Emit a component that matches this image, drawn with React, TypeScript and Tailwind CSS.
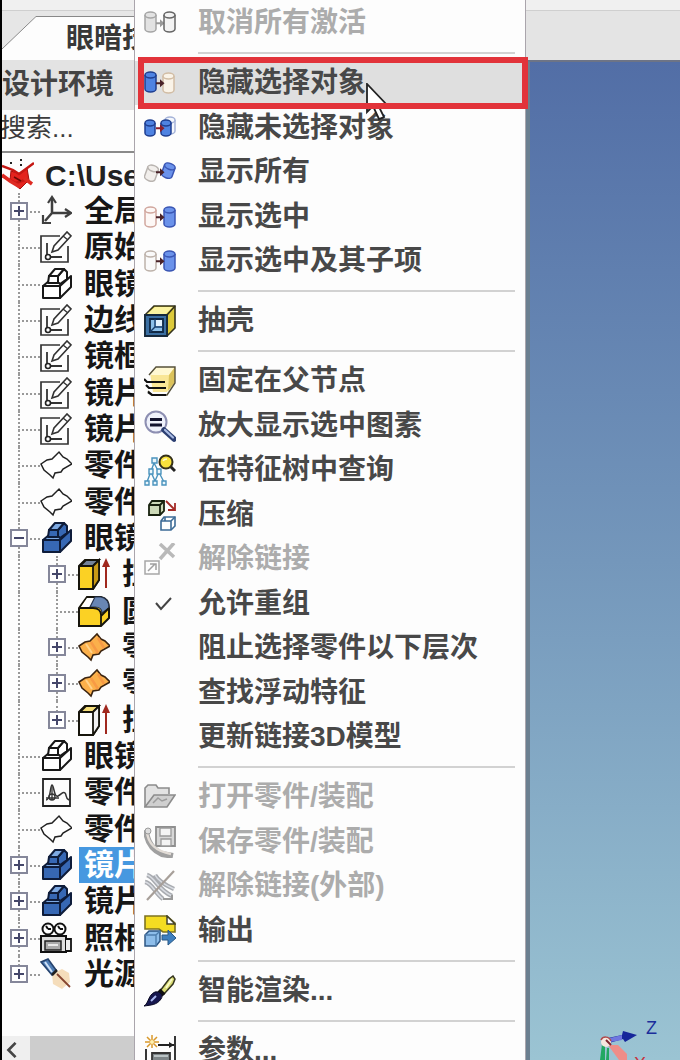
import { ReactNode } from "react";
import clsx from "clsx";

type MenuEntry = { label: string, icon?: ReactNode, disabled?: boolean, active?: boolean };
type TreeEntry = { label: string, icon: ReactNode, box?: "+" | "-", child?: boolean, selected?: boolean, last?: boolean };

function Svg({ children, className = "size-8" }: { children: ReactNode, className?: string }) {
    return <svg viewBox="0 0 32 32" className={clsx("shrink-0", className)} fill="none" aria-hidden="true">{children}</svg>;
}

function Cylinder({ x, y = 6, w = 11, h = 20, fill, stroke }:
    { x: number, y?: number, w?: number, h?: number, fill: string, stroke: string }) {
    const r = w / 2;
    return <g stroke={stroke} strokeWidth="1.5" fill={fill}>
        <path d={`M${x} ${y + 3} a${r} 3 0 0 1 ${w} 0 v${h - 6} a${r} 3 0 0 1 ${-w} 0 z`} />
        <path d={`M${x} ${y + 3} a${r} 3 0 0 0 ${w} 0`} />
    </g>;
}

function SmallArrow({ color = "#4a2228" }: { color?: string }) {
    return <path d="M12 15.2h4v-3l4.5 4-4.5 4v-3h-4z" fill={color} />;
}

const blue = { fill: "#4f83e2", stroke: "#1f3f91" };
const soft = { fill: "#6b92ea", stroke: "#3a56b4" };

const Deactivate = <Svg>
    <Cylinder x={1} y={5} fill="#e2e2e2" stroke="#a5a5a5" />
    <SmallArrow color="#999" />
    <Cylinder x={20} y={5} fill="#f3f3f3" stroke="#666" />
</Svg>;

const HideSelected = <Svg>
    <Cylinder x={1} y={5} {...blue} />
    <Cylinder x={19} y={6} fill="#faf3e8" stroke="#d2bda5" />
    <SmallArrow />
</Svg>;

const HideOthers = <Svg>
    <Cylinder x={21} y={5} w={10} h={17} fill="#f5f7fc" stroke="#a5b3d8" />
    <Cylinder x={1} y={8} w={10} h={16} {...blue} />
    <Cylinder x={17} y={8} w={10} h={16} {...blue} />
    <SmallArrow color="#8c1f2c" />
</Svg>;

const ShowAll = <Svg>
    <g transform="rotate(20 7 17)"><Cylinder x={2} y={9} w={11} h={16} fill="#f2efec" stroke="#b9b4b0" /></g>
    <g transform="rotate(20 24 14)"><Cylinder x={19} y={7} w={11} h={15} {...soft} /></g>
    <SmallArrow />
</Svg>;

const ShowSelected = <Svg>
    <Cylinder x={1} fill="#fdf8f6" stroke="#d1a79e" />
    <Cylinder x={20} {...soft} />
    <SmallArrow />
</Svg>;

const ShowChildren = <Svg>
    <Cylinder x={1} fill="#fafafa" stroke="#bdb2aa" />
    <Cylinder x={20} {...soft} />
    <SmallArrow />
</Svg>;

const Shell = <Svg>
    <path d="M1 10 10 1h21v22l-8 8H1z" fill="#dcc93a" stroke="#33321c" strokeWidth="1.6" />
    <path d="M3 9 11 2h18l-7 7z" fill="#fbf3a0" />
    <path d="M1 10h22v21M23 10l8-9" stroke="#33321c" strokeWidth="1.6" />
    <path d="M1 10h22v21H1z" fill="#3b6fa2" stroke="#15283b" strokeWidth="1.8" />
    <path d="M6 14h13v13H6z" fill="#8cc0ea" stroke="#102844" strokeWidth="1.8" />
    <path d="M6 27 11 22h8M11 22v-8" stroke="#173d6b" strokeWidth="1.4" />
    <path d="M12 15h6v6h-6z" fill="#e3f3ff" />
</Svg>;

const FixParent = <Svg>
    <path d="M6 8 12 2h19v15l-8 10H9z" fill="#f9e696" />
    <path d="M5 10 12 2h19l-6 8z" fill="#fff8d2" />
    <path d="M25 10 31 2v15l-7 9z" fill="#dbc25b" />
    <path d="M5 10 12 2h19v16l-8 12H8l-4-4" stroke="#55503a" strokeWidth="1.4" />
    <path d="M0 14l3 3h18M2 20l3 3h17M4 27l4 3h14" stroke="#111" strokeWidth="2.2" />
</Svg>;

const ZoomSelected = <Svg>
    <circle cx="12" cy="12" r="10.5" fill="#eef1fb" stroke="#8d8fb2" strokeWidth="2" />
    <path d="M6 9.500h12M6 15h12" stroke="#12132e" strokeWidth="2.8" />
    <path d="m20 20 10 9" stroke="#2c3f72" strokeWidth="5.500" strokeLinecap="round" />
    <path d="m21 20 8 7.500" stroke="#a9bbe3" strokeWidth="2.200" strokeLinecap="round" />
</Svg>;

const FindInTree = <Svg>
    <g stroke="#4a93bd" strokeWidth="1.400" fill="#eaf6fc">
        <path d="M10 9 3 28M10 9l10 19M7 18l4 9M15 18l-4 9" />
        <path d="M8 4h5v5H8zM5 15h4v5H5zM13 15h4v5h-4zM1 27h4v4H1zM9 27h4v4H9zM18 27h4v4h-4z" />
    </g>
    <path d="m26 12 5 5" stroke="#222" strokeWidth="3" />
    <circle cx="22" cy="8" r="6.500" fill="#f8e23c" stroke="#34301a" strokeWidth="2" />
    <path d="M19 7c1-2 3-2 4-2" stroke="#fffbd0" strokeWidth="1.500" />
</Svg>;

const Compress = <Svg>
    <path d="M5 6 8 2h12v10l-4 4H5z" fill="#cddab8" stroke="#18220f" strokeWidth="1.800" />
    <path d="M5 6h11v10M16 6l4-4" stroke="#18220f" strokeWidth="1.800" />
    <path d="M17 22 20 18h11v9l-4 4H17z" fill="#fff" stroke="#3c6b96" strokeWidth="1.600" />
    <path d="M17 22h10v9M27 22l4-4M21 18v4" stroke="#3c6b96" strokeWidth="1.600" />
    <path d="m22 2 8 8M31 4v7h-7" stroke="#a52b27" strokeWidth="1.800" />
</Svg>;

const Unlink = <Svg>
    <path d="M1 18h14v13H1z" stroke="#a7a7a7" strokeWidth="1.500" />
    <path d="m4 28 7-7M6 21h6v6" stroke="#a0a0a0" strokeWidth="1.500" />
    <path d="m16 1 14 13M30 0 16 16" stroke="#b9b9b9" strokeWidth="3.500" />
</Svg>;

const Check = <Svg><path d="m12 15 5 6 10-11" stroke="#444" strokeWidth="2" /></Svg>;

const OpenFolder = <Svg>
    <path d="M1 26V7l3-3h8l2 3h11v6" fill="#e2e2e2" stroke="#8c8c8c" strokeWidth="1.600" />
    <path d="m1 26 9-12h21l-8 12z" fill="#cfcfcf" stroke="#8c8c8c" strokeWidth="1.600" />
    <path d="m9 22 5-5 4 3 5-2" stroke="#9c9c9c" strokeWidth="1.500" />
</Svg>;

const SaveLinked = <Svg>
    <path d="M12 1h19v19H12z" fill="#d7d7d7" stroke="#8f8f8f" strokeWidth="1.800" />
    <path d="M16 2h11v8H16zM17 13h10v7H17z" fill="#f4f4f4" stroke="#9b9b9b" strokeWidth="1.300" />
    <path d="M2 4c1 13 7 20 16 24l11 2" stroke="#a0a0a0" strokeWidth="6" />
    <path d="M3 6c1 11 8 19 24 22" stroke="#e2dcd6" strokeWidth="2.500" />
    <circle cx="4" cy="5" r="3" fill="#ddd" stroke="#9b9b9b" />
</Svg>;

const UnlinkExternal = <Svg>
    <path d="M3 5c8 2 10 14 25 21M1 12c7 1 10 11 18 17M11 5c3 6 10 10 19 14" stroke="#a8abb0" strokeWidth="4.500" />
    <path d="M3 5c8 2 10 14 25 21M1 12c7 1 10 11 18 17M11 5c3 6 10 10 19 14" stroke="#d9dce2" strokeWidth="1.600" />
    <path d="M30 1 3 30" stroke="#a79f99" strokeWidth="2.200" />
    <path d="M19 29h9v-4" stroke="#999" strokeWidth="2" />
</Svg>;

const Export = <Svg>
    <path d="M1 1h22l8 7v9H19l-4-3H1z" fill="#f4dc22" stroke="#7d7322" strokeWidth="1.600" />
    <path d="M23 1v8h8z" fill="#fff" stroke="#44432b" strokeWidth="1.500" />
    <path d="m1 20 4-4h11v10l-4 5H1z" fill="#8dbdea" stroke="#2c5583" strokeWidth="1.500" />
    <path d="M1 20h11v11M12 20l4-4" stroke="#4d7eae" strokeWidth="1.400" />
    <path d="M18 20h6v-5l8 8-8 7v-5h-6z" fill="#3e7fbe" stroke="#285886" />
</Svg>;

const Brush = <Svg>
    <path d="m16 16 9-12 4-3 2 3-2 5-9 10z" fill="#d9dc74" stroke="#35351f" strokeWidth="1.500" />
    <path d="m15 15 5 5" stroke="#111" strokeWidth="4" />
    <path d="M0 31c5-3 4-11 11-14 5-1 9 3 6 7-4 6-10 6-17 7z" fill="#16164e" stroke="#0a0a22" />
    <path d="m7 26 5-5" stroke="#aab9f2" strokeWidth="2" />
    <path d="m22 13 6-9" stroke="#fbfbc9" strokeWidth="1.800" />
</Svg>;

const Params = <Svg>
    <path d="M31 1v30M14 10h16M2 14v17" stroke="#222" strokeWidth="1.800" />
    <path d="m25 7 5 3-5 3z" fill="#222" />
    <path d="M8 31V18h18v13" fill="#7d8588" stroke="#333" strokeWidth="1.800" />
    <path d="M10 21h14" stroke="#b9c2c4" strokeWidth="2" />
    <path d="M8 0v13M1 7h14M3 2l10 10M13 2 3 12" stroke="#d9992b" strokeWidth="1.500" />
    <circle cx="8" cy="7" r="2" fill="#fff0b0" />
</Svg>;

const Part = <Svg>
    <path d="m9 12 9 3 7-6 2 12-9 9-10-9z" fill="#e4231e" stroke="#a50f0c" />
    <path d="m0 7 11 4 6 4 15-11M0 17l14 7 12-4" stroke="#c51713" strokeWidth="2.500" />
    <path d="m0 16 8 6 10 6M22 19l8 6" stroke="#de2a22" strokeWidth="3.500" />
    <path d="m12 18 7 4" stroke="#6b0906" strokeWidth="1.500" />
    <path d="M8 4h2M18 1h2M18 6h2" stroke="#222" strokeWidth="2" />
</Svg>;

const Axes = <Svg>
    <path d="M12 4v14h17M12 18 5 26" stroke="#3f3f3f" strokeWidth="2.500" />
    <path d="m8 8 4-6 4 6M25 14l6 4-6 4M3 20v8h8" stroke="#3f3f3f" strokeWidth="2.200" />
</Svg>;

const Sketch = <Svg>
    <path d="M20 5H1v26h27V15" stroke="#333" strokeWidth="1.700" />
    <path d="M7 12v12M10 26h12" stroke="#333" strokeWidth="1.800" />
    <circle cx="8" cy="26" r="2.500" stroke="#222" strokeWidth="1.600" />
    <path d="m12 21 2-6L27 1l4 4-13 14z" fill="#fff" stroke="#333" strokeWidth="1.600" />
    <path d="m23 5 5 4" stroke="#333" strokeWidth="1.400" />
</Svg>;

function Block({ fill, top, stroke }: { fill: string, top: string, stroke: string }) {
    return <Svg>
        <g stroke={stroke} strokeWidth="2" strokeLinejoin="round">
            <path d="m3 18 6-5h18l4-4-10 9z" fill={top} />
            <path d="M20 18 31 8v11L20 30z" fill={fill} />
            <path d="M3 18h17v12H3z" fill={fill} />
            <path d="m18 8 6-7 3 3v7l-7 5-2-2z" fill={fill} />
            <path d="m9 8 6-7h9l-6 7z" fill={top} />
            <path d="M9 8h9v7H8z" fill={fill} />
        </g>
    </Svg>;
}

const WhiteBlock = <Block fill="#fff" top="#fff" stroke="#181818" />;
const BlueBlock = <Block fill="#3768b4" top="#7da9e2" stroke="#0e1c3a" />;

const surface = "M1 15 7 11 12 10 19 3 23 8 27 10 32 15 23 20 21 23 15 24 13 29 10 26 4 21z";
const Surface = <Svg><path d={surface} fill="#fff" stroke="#222" strokeWidth="1.500" /></Svg>;
const OrangeSurface = <Svg>
    <path d={surface} fill="#fbb04b" stroke="#3b2410" strokeWidth="1.600" />
    <path d="m13 11 7 11M20 7l6 10" stroke="#f79a45" strokeWidth="2.500" />
    <path d="m8 13 6 9" stroke="#ffd28a" strokeWidth="2" />
</Svg>;

function Extrude({ fill, side, top }: { fill: string, side: string, top: string }) {
    return <Svg>
        <path d="m1 8 6-6h14v20l-6 9H1z" fill={fill} stroke="#17150c" strokeWidth="2" />
        <path d="m2 8 6-6h13l-6 6z" fill={top} stroke="#17150c" strokeWidth="1.800" />
        <path d="m15 8 6-6v20l-6 9z" fill={side} stroke="#17150c" strokeWidth="1.800" />
        <path d="M28 30V5" stroke="#a0281e" strokeWidth="2" />
        <path d="m24 9 4-9 4 9z" fill="#a0281e" />
    </Svg>;
}

const Fillet = <Svg>
    <path d="m1 13 8-11h14c5 1 8 5 8 11v10l-8 8H1z" fill="#fbd124" stroke="#17150c" strokeWidth="2" />
    <path d="m3 12 6-9h8l-5 9z" fill="#fff" />
    <path d="M12 12 17 2h6c5 1 8 5 8 11l-7 5c0-4-3-6-7-6z" fill="#6886b4" stroke="#26344f" strokeWidth="1.200" />
    <path d="M1 13h14c5 0 8 3 8 7v11M23 21l8-8" stroke="#17150c" strokeWidth="1.800" />
</Svg>;

const Curve = <Svg>
    <path d="M3 3h27v27H3z" stroke="#222" strokeWidth="1.800" />
    <path d="M6 24c5 0 4-15 6-15s2 13 6 11 5-5 7-3 0 5 4 7" stroke="#333" strokeWidth="1.500" />
    <path d="M6 22h13M12 9v15" stroke="#333" strokeWidth="1.300" />
    <circle cx="12" cy="21" r="3" stroke="#333" strokeWidth="1.300" />
</Svg>;

const Camera = <Svg>
    <path d="M1 14h25v16H1z" fill="#ddd" stroke="#111" strokeWidth="2" />
    <path d="M5 19h16v9H5z" fill="#aaa" stroke="#222" strokeWidth="1.500" />
    <path d="M8 23h10" stroke="#fff" strokeWidth="1.500" />
    <path d="M26 17h5v12h-5" fill="#eee" stroke="#111" strokeWidth="1.800" />
    <circle cx="8" cy="7" r="5.500" fill="#fff" stroke="#111" strokeWidth="2" />
    <circle cx="20" cy="7" r="5.500" fill="#fff" stroke="#111" strokeWidth="2" />
    <path d="m8 7-2-3M8 7h3M20 7l-2-3M20 7h3" stroke="#111" strokeWidth="2" />
</Svg>;

const Light = <Svg>
    <path d="m12 16 10-5 7 4 1 9-8 7-9-5z" fill="#f5ddbb" />
    <path d="m1 4 7-3 8 11-4 5z" fill="#4f7db5" stroke="#26436e" strokeWidth="1.600" />
    <path d="m5 4 7 10" stroke="#d0e2f7" strokeWidth="2" />
    <path d="m12 17 5-5" stroke="#222" strokeWidth="2.500" />
    <path d="m17 16 13 13" stroke="#86442f" strokeWidth="1.800" />
</Svg>;

const menu: MenuEntry[][] = [
    [{ label: "取消所有激活", icon: Deactivate, disabled: true }],
    [
        { label: "隐藏选择对象", icon: HideSelected, active: true },
        { label: "隐藏未选择对象", icon: HideOthers },
        { label: "显示所有", icon: ShowAll },
        { label: "显示选中", icon: ShowSelected },
        { label: "显示选中及其子项", icon: ShowChildren },
    ],
    [{ label: "抽壳", icon: Shell }],
    [
        { label: "固定在父节点", icon: FixParent },
        { label: "放大显示选中图素", icon: ZoomSelected },
        { label: "在特征树中查询", icon: FindInTree },
        { label: "压缩", icon: Compress },
        { label: "解除链接", icon: Unlink, disabled: true },
        { label: "允许重组", icon: Check },
        { label: "阻止选择零件以下层次" },
        { label: "查找浮动特征" },
        { label: "更新链接3D模型" },
    ],
    [
        { label: "打开零件/装配", icon: OpenFolder, disabled: true },
        { label: "保存零件/装配", icon: SaveLinked, disabled: true },
        { label: "解除链接(外部)", icon: UnlinkExternal, disabled: true },
        { label: "输出", icon: Export },
    ],
    [{ label: "智能渲染...", icon: Brush }],
    [{ label: "参数...", icon: Params }],
];

const tree: TreeEntry[] = [
    { label: "全局", icon: Axes, box: "+" },
    { label: "原始", icon: Sketch },
    { label: "眼镜", icon: WhiteBlock },
    { label: "边线", icon: Sketch },
    { label: "镜框", icon: Sketch },
    { label: "镜片", icon: Sketch },
    { label: "镜片", icon: Sketch },
    { label: "零件", icon: Surface },
    { label: "零件", icon: Surface },
    { label: "眼镜", icon: BlueBlock, box: "-" },
    { label: "拉", icon: <Extrude fill="#fbd124" side="#c99a16" top="#74839a" />, box: "+", child: true },
    { label: "圆", icon: Fillet, child: true },
    { label: "零", icon: OrangeSurface, box: "+", child: true },
    { label: "零", icon: OrangeSurface, box: "+", child: true },
    { label: "拉", icon: <Extrude fill="#fff" side="#f2f2f2" top="#f6df7c" />, box: "+", child: true, last: true },
    { label: "眼镜", icon: WhiteBlock },
    { label: "零件", icon: Curve },
    { label: "零件", icon: Surface },
    { label: "镜片", icon: BlueBlock, box: "+", selected: true },
    { label: "镜片", icon: BlueBlock, box: "+" },
    { label: "照相", icon: Camera, box: "+" },
    { label: "光源", icon: Light, box: "+", last: true },
];

// One indent column: the dotted trunk, the branch to the icon and the expander box
function Gutter({ branch, box, last }: { branch?: boolean, box?: "+" | "-", last?: boolean }) {
    return <div className="relative w-[38px] shrink-0 self-stretch">
        <span className={clsx("absolute left-4 top-0 border-l-2 border-dotted border-[#999]", last ? "h-1/2" : "h-full")} />
        {branch && <span className="absolute left-4 right-0 top-1/2 border-t-2 border-dotted border-[#999]" />}
        {box && <button
            aria-label={box === "+" ? "展开" : "折叠"}
            className="absolute left-2 top-1/2 size-[18px] -translate-y-1/2 border-2 border-[#85879a] bg-white"
        >
            <span className="absolute inset-x-0.5 top-1/2 h-0.5 -translate-y-1/2 bg-[#45476a]" />
            {box === "+" && <span className="absolute inset-y-0.5 left-1/2 w-0.5 -translate-x-1/2 bg-[#45476a]" />}
        </button>}
    </div>;
}

function TreeRow({ item }: { item: TreeEntry }) {
    return <li className="flex h-9 items-center nth-[3n]:h-[37px]">
        <Gutter branch={!item.child} box={item.child ? undefined : item.box} last={item.last && !item.child} />
        {item.child && <Gutter branch box={item.box} last={item.last} />}
        {item.icon}
        <span
            className={clsx("ml-[7px] flex flex-1 items-center self-stretch overflow-hidden pl-[5px]",
                item.selected ? "bg-[#4698e0] text-white" : "text-[#161616]")}
        >
            {item.label}
        </span>
    </li>;
}

function SidePanel() {
    return <aside className="flex w-[134px] shrink-0 flex-col overflow-hidden border-l-2 border-black bg-[#fdfdfd] whitespace-nowrap">
        <div className="h-[11px] shrink-0 border-b border-[#cfcfcf] bg-[#f0f0f0]" />
        <div className="flex shrink-0 bg-[#e6e6e6] pt-[5px]">
            <svg viewBox="0 0 34 44" className="h-11 w-[34px] shrink-0" aria-hidden="true">
                <path d="M0 33 34 0v44H0z" fill="#fdfdfd" />
                <path d="M0 33 34 .5" stroke="#888" fill="none" />
            </svg>
            <button className="flex flex-1 items-center border-t border-[#888] bg-[#fdfdfd] pl-[30px] text-[28px]/10 font-bold text-[#383838]">
                眼暗技
            </button>
        </div>
        <h2 className="shrink-0 bg-[#e3e3e3] text-[28px]/[50px] font-bold text-[#444]">设计环境</h2>
        <input
            aria-label="搜索"
            placeholder="搜索..."
            className="-ml-0.5 h-[43px] shrink-0 border-b-2 border-[#8a8a8a] pb-1 text-[26px] outline-none placeholder:text-[#3c3c3c]"
        />
        <div className="flex h-10 shrink-0 items-center gap-[11px] pt-1 text-[30px] font-bold text-[#222]">
            {Part}
            <span>C:\Use</span>
        </div>
        <ul className="text-[30px]/9 font-bold">
            {tree.map((item, i) => <TreeRow key={i} item={item} />)}
        </ul>
        <div className="mt-auto flex h-6 shrink-0 bg-[#cdcdcd]">
            <button aria-label="向左滚动" className="flex w-7 items-center bg-[#efefef] pl-1 pt-1">
                <svg viewBox="0 0 12 18" className="h-4 w-3" fill="none" aria-hidden="true">
                    <path d="M10 1 2 9l8 8" stroke="#444" strokeWidth="3" />
                </svg>
            </button>
        </div>
    </aside>;
}

function MenuItem({ item }: { item: MenuEntry }) {
    return <li className="relative h-11 even:h-[45px]">
        <button
            role="menuitem"
            disabled={item.disabled}
            className={clsx("flex size-full items-center gap-[22px] pl-[9px]",
                item.disabled ? "text-[#acacac]" : "text-[#484848]")}
        >
            <span className="size-8 shrink-0">{item.icon}</span>
            {item.label}
        </button>
        {item.active && <>
            <svg viewBox="0 0 22 38" className="absolute left-[231px] top-[22px] z-10 h-[38px] w-[22px]" aria-hidden="true">
                <path d="M1 1v28l6-6 6 13 5-2-6-12h9z" fill="#fff" stroke="#222" strokeWidth="1.800" />
            </svg>
            <span className="absolute -right-[3px] -top-1 -bottom-1 left-[3px] z-20 border-6 border-[#e2333a]" />
        </>}
    </li>;
}

function ContextMenu() {
    return <nav className="relative z-10 w-[392px] shrink-0 border-x border-[#aaa5ac] bg-[#fdfdfd] pt-px text-[28px] font-bold whitespace-nowrap">
        {menu.map((group, i) => <div key={i}>
            {i > 0 && <div className="flex h-4 items-center pl-[63px] pr-[10px]">
                <hr className="flex-1 border-t-2 border-[#d2d2d2]" />
            </div>}
            <ul role="menu" className={clsx(group[0].active && "[&>li:first-child>button]:bg-[#dfdfdf]")}>
                {group.map(item => <MenuItem key={item.label} item={item} />)}
            </ul>
        </div>)}
    </nav>;
}

function Viewport() {
    return <main className="flex flex-1 flex-col">
        <div className="h-[11px] shrink-0 border-b border-[#cfcfcf] bg-[#f0f0f0]" />
        <div className="h-[49px] shrink-0 bg-[#e4e4e4]" />
        <div className="flex flex-1 items-end justify-end border-l-4 border-t-2 border-l-[#6b7f90] border-t-[#6d7486] bg-linear-to-b from-[#526ea6] via-[#7497bb] to-[#9bc4d3] pr-3">
            <svg viewBox="0 0 80 44" className="h-11 w-20" aria-label="坐标轴">
                <path d="m20 22 14-3 1-4 14 4-12 7-2-3-14 4z" fill="#16269a" />
                <path d="m22 22 12-3v5l-12 2z" fill="#6f76df" />
                <path d="m20 29 10 0 9 9v6h-8z" fill="#ee8d88" />
                <path d="M14 28h3v16h-5zM19 32h2v12h-3z" fill="#22a862" />
                <circle cx="18" cy="26" r="5" fill="#f6e7df" />
                <path d="M13 24c2-4 8-4 10 1" stroke="#b14b4b" strokeWidth="1.500" fill="none" />
                <path d="m18 24 5 5" stroke="#7d2430" strokeWidth="2" />
                <text x="58" y="18" fontSize="18" fill="#1b2d9b">Z</text>
                <text x="46" y="54" fontSize="18" fill="#c73440">X</text>
            </svg>
        </div>
    </main>;
}

export default function App() {
    return <div className="flex h-screen overflow-hidden bg-white font-['Liberation_Sans','Noto_Sans_CJK_SC',sans-serif]">
        <SidePanel />
        <ContextMenu />
        <Viewport />
    </div>;
}
